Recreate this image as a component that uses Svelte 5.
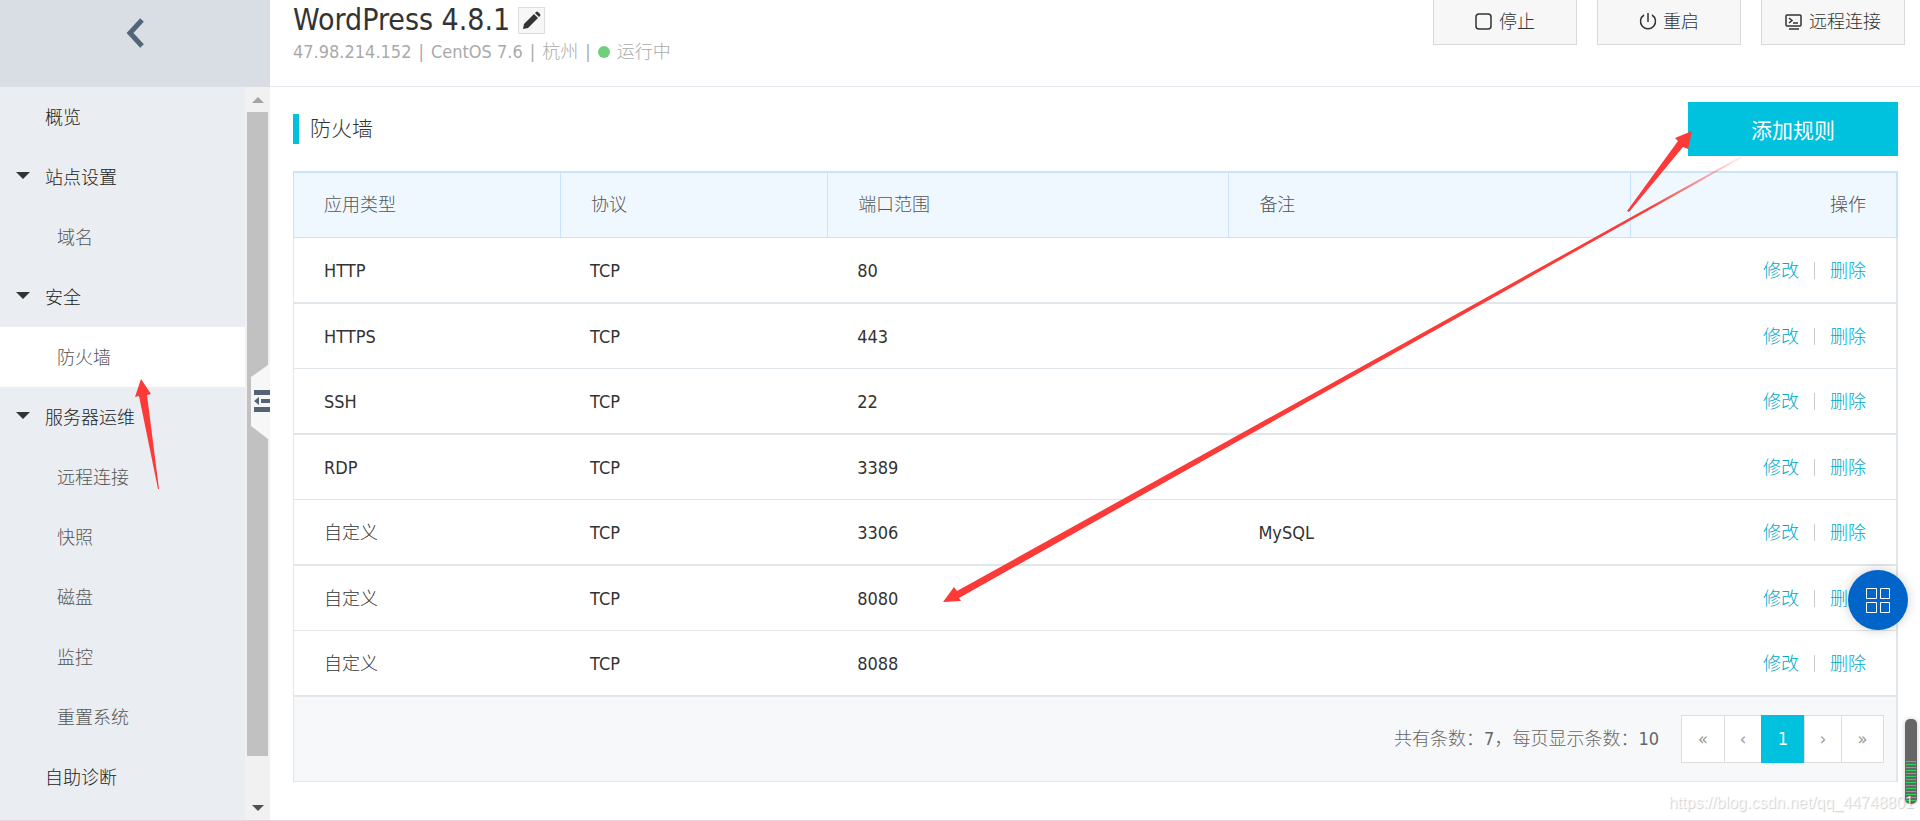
<script>
	let current = 'firewall';
	let page = 1;

	const menu = [
		{ id: 'overview', label: '概览' },
		{ id: 'site', label: '站点设置', group: true },
		{ id: 'domain', label: '域名', child: true },
		{ id: 'security', label: '安全', group: true },
		{ id: 'firewall', label: '防火墙', child: true },
		{ id: 'ops', label: '服务器运维', group: true },
		{ id: 'remote', label: '远程连接', child: true },
		{ id: 'snapshot', label: '快照', child: true },
		{ id: 'disk', label: '磁盘', child: true },
		{ id: 'monitor', label: '监控', child: true },
		{ id: 'reset', label: '重置系统', child: true },
		{ id: 'diagnose', label: '自助诊断' }
	];

	const rules = [
		{ type: 'HTTP', protocol: 'TCP', port: '80', remark: '' },
		{ type: 'HTTPS', protocol: 'TCP', port: '443', remark: '' },
		{ type: 'SSH', protocol: 'TCP', port: '22', remark: '' },
		{ type: 'RDP', protocol: 'TCP', port: '3389', remark: '' },
		{ type: '自定义', protocol: 'TCP', port: '3306', remark: 'MySQL' },
		{ type: '自定义', protocol: 'TCP', port: '8080', remark: '' },
		{ type: '自定义', protocol: 'TCP', port: '8088', remark: '' }
	];
</script>

<div class="layout">
	<aside class="sidebar">
		<button class="back" aria-label="返回">
			<svg width="20" height="32" viewBox="0 0 20 32">
				<path d="M17 3 L5 16 L17 29" fill="none" stroke="#546478" stroke-width="5" />
			</svg>
		</button>
		<div class="side-body">
			<nav>
				{#each menu as item}
					<a
						href={'#' + item.id}
						class:child={item.child}
						class:active={current === item.id}
						on:click={() => (current = item.id)}
					>
						{#if item.group}<i class="caret"></i>{/if}
						{item.label}
					</a>
				{/each}
			</nav>
			<div class="scrollbar">
				<i class="up"></i>
				<div class="thumb"></div>
				<i class="down"></i>
			</div>
			<button class="collapse" aria-label="收起菜单">
				<svg width="19" height="74" viewBox="0 0 19 74">
					<path d="M0 12 L17 0 H19 V74 H17 L0 61 Z" fill="#f7f7f7" />
					<path d="M3 25h16v5H3z M10 34h9v4h-9z M3 42h16v5H3z M3 36l5-4v8z" fill="#546478" />
				</svg>
			</button>
		</div>
	</aside>

	<div class="main">
		<header>
			<div class="server">
				<div class="name">
					<h1>WordPress 4.8.1</h1>
					<button class="edit" aria-label="编辑名称">
						<svg width="19" height="19" viewBox="0 0 19 19" fill="#333">
							<path d="M1 18 L2 13 L12 3 L16 7 L6 17 Z" />
							<path d="M13 2 L14 1 Q15 0 16 1 L18 3 Q19 4 18 5 L17 6 Z" />
						</svg>
					</button>
				</div>
				<div class="meta">
					<span>47.98.214.152</span>
					<span>|</span>
					<span>CentOS 7.6</span>
					<span>|</span>
					<span>杭州</span>
					<span>|</span>
					<span class="status"><i></i>运行中</span>
				</div>
			</div>
			<div class="actions">
				<button>
					<svg width="18" height="18" viewBox="0 0 18 18">
						<rect x="1" y="1" width="15" height="15" rx="3" />
					</svg>
					停止
				</button>
				<button>
					<svg width="18" height="18" viewBox="0 0 18 18">
						<path d="M9 0 V9 M5 2 A7.5 7.5 0 1 0 13 2" />
					</svg>
					重启
				</button>
				<button>
					<svg width="18" height="18" viewBox="0 0 18 18">
						<rect x="1" y="2" width="15" height="11" rx="1" />
						<path d="M4 5 L7 7.5 L4 10 M8 10 H13 M4 16 H14" />
					</svg>
					远程连接
				</button>
			</div>
		</header>

		<main>
			<div class="heading">
				<h2>防火墙</h2>
				<button class="add">添加规则</button>
			</div>

			<div class="panel">
				<table>
					<thead>
						<tr>
							<th class="narrow">应用类型</th>
							<th class="narrow">协议</th>
							<th class="wide">端口范围</th>
							<th class="wide">备注</th>
							<th class="ops">操作</th>
						</tr>
					</thead>
					<tbody>
						{#each rules as rule}
							<tr>
								<td>{rule.type}</td>
								<td>{rule.protocol}</td>
								<td>{rule.port}</td>
								<td>{rule.remark}</td>
								<td class="ops">
									<div>
										<a href="#edit">修改</a>
										<i></i>
										<a href="#delete">删除</a>
									</div>
								</td>
							</tr>
						{/each}
					</tbody>
				</table>
				<div class="footer">
					<span>共有条数：{rules.length}，每页显示条数：10</span>
					<div class="pager">
						<button class="end">«</button>
						<button>‹</button>
						<button class:on={page === 1}>1</button>
						<button>›</button>
						<button class="end">»</button>
					</div>
				</div>
			</div>
		</main>
	</div>

	<button class="fab" aria-label="快捷入口">
		<svg width="26" height="26" viewBox="0 0 26 26" fill="none" stroke="#fff">
			<path d="M1.5 1.5h10v10h-10z M15.5 1.5h9v10h-9z M1.5 15.5h10v10h-10z M15.5 15.5h9v10h-9z" />
		</svg>
	</button>

	<div class="meter"><div></div></div>
	<div class="watermark">https://blog.csdn.net/qq_44748801</div>

	<svg class="arrows" width="1920" height="820" viewBox="0 0 1920 820" fill="#fc3a38">
		<defs>
			<linearGradient id="fade" gradientUnits="userSpaceOnUse" x1="1650" y1="208" x2="1750" y2="152">
				<stop offset="0" stop-color="#fc3a38" />
				<stop offset="1" stop-color="#fc3a38" stop-opacity="0" />
			</linearGradient>
		</defs>
		<path d="M141 379 L151 394 L147 395 L159 489 L158 489 L139 396 L135 397 Z" />
		<path d="M1692 131 L1688 149 L1683 147 L1629 212 L1627 211 L1678 141 L1675 138 Z" />
		<path d="M943 602 L954 587 L957 591 L1745 154 L1745 156 L959 598 L961 601 Z" fill="url(#fade)" />
	</svg>
</div>

<style>
	:global(body) {
		margin: 0;
		background: #fff;
	}
	.layout {
		position: relative;
		display: flex;
		box-sizing: border-box;
		min-height: 100vh;
		overflow: hidden;
		border-bottom: 1px solid #e8d3dc;
		color: #333;
		font-family: 'DejaVu Sans Condensed', 'Noto Sans CJK SC', sans-serif;
		font-size: 18px;
		font-weight: 300;
		line-height: 24px;
	}
	button {
		padding: 0;
		border: none;
		background: none;
		color: inherit;
		font: inherit;
		cursor: pointer;
	}
	a {
		text-decoration: none;
	}

	.sidebar {
		display: flex;
		flex-direction: column;
		flex: none;
		width: 270px;
	}
	.back {
		display: flex;
		justify-content: center;
		align-items: flex-start;
		height: 87px;
		padding-top: 17px;
		background: #d9dee4;
	}
	.side-body {
		position: relative;
		display: flex;
		flex: 1;
	}
	nav {
		flex: 1;
		background: #eaedf1;
	}
	nav a {
		position: relative;
		display: block;
		padding: 2px 0 0 45px;
		color: #222;
		line-height: 58px;
	}
	nav a.child {
		padding-left: 57px;
		color: #555;
	}
	nav a.active {
		background: #fff;
	}
	.caret {
		position: absolute;
		top: 25px;
		left: 16px;
		border: 7px solid transparent;
		border-top-color: #333;
		border-bottom: none;
	}
	.scrollbar {
		display: flex;
		flex-direction: column;
		align-items: center;
		width: 25px;
		background: #f1f1f1;
	}
	.thumb {
		flex: 1;
		width: 21px;
		margin: 9px 0 49px;
		background: #c1c1c1;
	}
	.up,
	.down {
		border: 6px solid transparent;
	}
	.up {
		margin-top: 10px;
		border-top: none;
		border-bottom-color: #a3a3a3;
	}
	.down {
		margin-bottom: 9px;
		border-bottom: none;
		border-top-color: #505050;
	}
	.collapse {
		position: absolute;
		top: 278px;
		right: 0;
		height: 74px;
	}
	.collapse svg {
		display: block;
	}

	.main {
		flex: 1;
		min-width: 0;
	}
	header {
		display: flex;
		justify-content: space-between;
		height: 86px;
		padding: 0 15px 0 23px;
		border-bottom: 1px solid #e5ebf0;
	}
	.name {
		display: flex;
		align-items: center;
		gap: 8px;
		height: 40px;
	}
	h1 {
		margin: 0;
		font-size: 30px;
		font-weight: 400;
	}
	.edit {
		display: flex;
		align-items: center;
		justify-content: center;
		box-sizing: border-box;
		width: 27px;
		height: 27px;
		border: 1px solid #ddd;
		background: #f7f7f7;
	}
	.meta {
		display: flex;
		gap: 7px;
		color: #aaa;
	}
	.status {
		display: flex;
		align-items: center;
		gap: 7px;
	}
	.status i {
		width: 12px;
		height: 12px;
		border-radius: 50%;
		background: #6fcf7f;
	}
	.actions {
		display: flex;
		gap: 20px;
	}
	.actions button {
		display: flex;
		align-items: center;
		justify-content: center;
		gap: 6px;
		box-sizing: border-box;
		width: 144px;
		height: 45px;
		border: 1px solid #d9d9d9;
		border-top: none;
		background: #f7f7f7;
	}
	.actions svg {
		fill: none;
		stroke: #333;
		stroke-width: 1.5;
	}

	main {
		padding: 15px 22px 0 23px;
	}
	.heading {
		display: flex;
		align-items: center;
		justify-content: space-between;
	}
	h2 {
		margin: 0;
		padding-left: 11px;
		border-left: 6px solid #00c1de;
		font-size: 21px;
		font-weight: 300;
		line-height: 30px;
	}
	.add {
		width: 210px;
		height: 54px;
		padding-top: 4px;
		background: #00c1de;
		color: #fff;
		font-size: 21px;
		font-weight: 400;
	}
	.panel {
		margin-top: 15px;
	}
	table {
		width: 100%;
		border-collapse: separate;
		border-spacing: 0;
		table-layout: fixed;
	}
	th,
	td {
		box-sizing: border-box;
		padding: 0 30px;
		text-align: left;
		font-weight: 300;
	}
	th {
		height: 67px;
		border-top: 2px solid #c9e3fc;
		border-bottom: 1px solid #c9e3fc;
		border-left: 1px solid #c9e3fc;
		background: #f0f8ff;
		color: #555;
	}
	th:last-child {
		border-right: 2px solid #c9e3fc;
	}
	.narrow {
		width: 16.64%;
	}
	.wide {
		width: 25%;
	}
	td {
		height: 66px;
		padding-top: 1px;
		border-bottom: 2px solid #e1e6eb;
	}
	tr:nth-child(even) td {
		height: 65px;
		border-bottom-width: 1px;
	}
	td:first-child {
		border-left: 1px solid #e1e6eb;
	}
	td:last-child {
		border-right: 2px solid #e1e6eb;
	}
	.ops {
		text-align: right;
	}
	.ops div {
		display: flex;
		align-items: center;
		justify-content: flex-end;
		gap: 15px;
	}
	.ops a {
		color: #00a9c8;
	}
	.ops i {
		width: 1px;
		height: 17px;
		background: #ccc;
	}
	.footer {
		display: flex;
		align-items: center;
		justify-content: flex-end;
		gap: 22px;
		height: 84px;
		padding-right: 12px;
		border: 1px solid #e1e6eb;
		border-top: none;
		border-right-width: 2px;
		background: #f6f8fa;
		color: #666;
	}
	.pager {
		display: flex;
		border: 1px solid #ddd;
		background: #fff;
	}
	.pager button {
		width: 37px;
		height: 46px;
		color: #999;
	}
	.pager .end {
		width: 42px;
	}
	.pager button + button {
		border-left: 1px solid #ddd;
	}
	.pager button.on {
		width: 43px;
		height: 48px;
		margin: -1px 0;
		border-color: #00c1de;
		background: #00c1de;
		color: #fff;
	}

	.fab {
		position: absolute;
		right: 12px;
		top: 570px;
		display: flex;
		align-items: center;
		justify-content: center;
		width: 60px;
		height: 60px;
		border-radius: 50%;
		background: #0064c8;
		box-shadow: 0 0 12px rgba(0, 0, 0, 0.2);
	}
	.meter {
		position: absolute;
		right: 3px;
		bottom: 16px;
		display: flex;
		align-items: flex-end;
		box-sizing: border-box;
		width: 12px;
		height: 85px;
		padding: 0 1px 2px;
		border-radius: 5px;
		background: #666;
		box-shadow: 0 0 5px rgba(0, 0, 0, 0.2);
	}
	.meter div {
		width: 100%;
		height: 41px;
		background: repeating-linear-gradient(#2fd45c 0 1px, #666 1px 3px);
	}
	.watermark {
		position: absolute;
		right: 6px;
		bottom: 5px;
		color: rgba(255, 255, 255, 0.8);
		font-family: 'Liberation Sans', sans-serif;
		font-size: 16px;
		text-shadow: 1px 1px 1px rgba(0, 0, 0, 0.2);
	}
	.arrows {
		position: absolute;
		top: 0;
		left: 0;
		pointer-events: none;
	}
</style>
